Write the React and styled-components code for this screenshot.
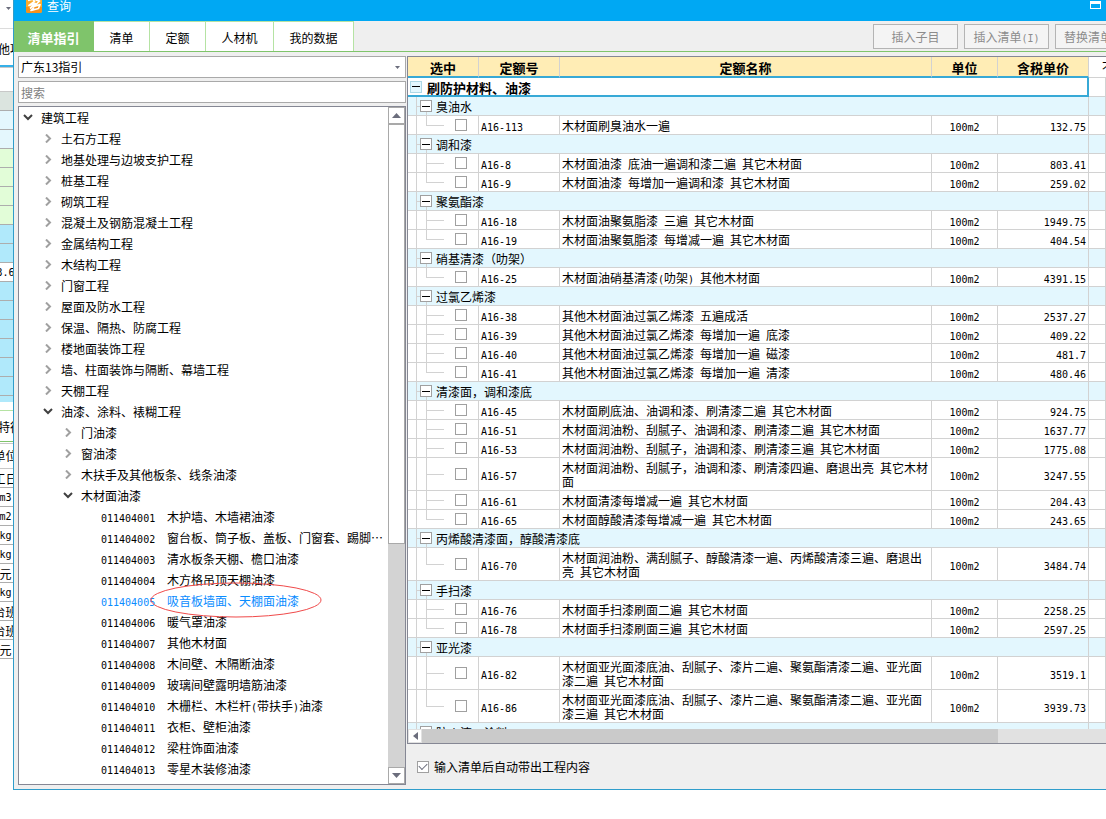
import React, { useState } from "react";
import styled, { createGlobalStyle } from "styled-components";

const COLORS = {
  titleBlue: "#00a8f3",
  frameBlue: "#2f9dcb",
  green: "#7fc46b",
  lightGreen: "#b5e3a3",
  panel: "#efefef",
  line: "#d2d2d2",
  frame: "#858794",
  inputBorder: "#a9a9a9",
  header: "#ffedb5",
  group: "#e3f7fe",
  focus: "#37a9d6",
  link: "#0a8cff",
};

const stripTop = [
  { color: "#dbe4df" },
  { color: "#e4f7fd" },
  { color: "#e4f7fd" },
  { color: "#e2fdd8" },
  { color: "#e2fdd8" },
  { color: "#e2fdd8" },
  { color: "#e2fdd8" },
  { color: "#b0e9fb" },
  { color: "#b0e9fb" },
  { color: "#fff", text: "3.6" },
  { color: "#b0e9fb" },
  { color: "#b0e9fb" },
  { color: "#b0e9fb" },
  { color: "#b0e9fb" },
  { color: "#b0e9fb" },
  { color: "#b0e9fb" },
];

const stripUnits = ["m3", "m2", "kg", "kg", "元", "kg", "台班", "台班", "元"];

const tabs = [
  { label: "清单指引", width: 80 },
  { label: "清单", width: 56 },
  { label: "定额", width: 56 },
  { label: "人材机", width: 68 },
  { label: "我的数据", width: 80 },
];

const tree = [
  { level: 0, open: true, name: "建筑工程" },
  { level: 1, name: "土石方工程" },
  { level: 1, name: "地基处理与边坡支护工程" },
  { level: 1, name: "桩基工程" },
  { level: 1, name: "砌筑工程" },
  { level: 1, name: "混凝土及钢筋混凝土工程" },
  { level: 1, name: "金属结构工程" },
  { level: 1, name: "木结构工程" },
  { level: 1, name: "门窗工程" },
  { level: 1, name: "屋面及防水工程" },
  { level: 1, name: "保温、隔热、防腐工程" },
  { level: 1, name: "楼地面装饰工程" },
  { level: 1, name: "墙、柱面装饰与隔断、幕墙工程" },
  { level: 1, name: "天棚工程" },
  { level: 1, open: true, name: "油漆、涂料、裱糊工程" },
  { level: 2, name: "门油漆" },
  { level: 2, name: "窗油漆" },
  { level: 2, name: "木扶手及其他板条、线条油漆" },
  { level: 2, open: true, name: "木材面油漆" },
  { level: 3, code: "011404001", name: "木护墙、木墙裙油漆" },
  { level: 3, code: "011404002", name: "窗台板、筒子板、盖板、门窗套、踢脚…" },
  { level: 3, code: "011404003", name: "清水板条天棚、檐口油漆" },
  { level: 3, code: "011404004", name: "木方格吊顶天棚油漆" },
  { level: 3, code: "011404005", name: "吸音板墙面、天棚面油漆", marked: true },
  { level: 3, code: "011404006", name: "暖气罩油漆" },
  { level: 3, code: "011404007", name: "其他木材面" },
  { level: 3, code: "011404008", name: "木间壁、木隔断油漆" },
  { level: 3, code: "011404009", name: "玻璃间壁露明墙筋油漆" },
  { level: 3, code: "011404010", name: "木栅栏、木栏杆(带扶手)油漆" },
  { level: 3, code: "011404011", name: "衣柜、壁柜油漆" },
  { level: 3, code: "011404012", name: "梁柱饰面油漆" },
  { level: 3, code: "011404013", name: "零星木装修油漆" },
];

const groups = [
  { name: "臭油水", items: [["A16-113", "木材面刷臭油水一遍", "132.75"]] },
  {
    name: "调和漆",
    items: [
      ["A16-8", "木材面油漆 底油一遍调和漆二遍 其它木材面", "803.41"],
      ["A16-9", "木材面油漆 每增加一遍调和漆 其它木材面", "259.02"],
    ],
  },
  {
    name: "聚氨酯漆",
    items: [
      ["A16-18", "木材面油聚氨脂漆 三遍 其它木材面", "1949.75"],
      ["A16-19", "木材面油聚氨脂漆 每增减一遍 其它木材面", "404.54"],
    ],
  },
  {
    name: "硝基清漆（叻架）",
    items: [["A16-25", "木材面油硝基清漆(叻架) 其他木材面", "4391.15"]],
  },
  {
    name: "过氯乙烯漆",
    items: [
      ["A16-38", "其他木材面油过氯乙烯漆 五遍成活", "2537.27"],
      ["A16-39", "其他木材面油过氯乙烯漆 每增加一遍 底漆", "409.22"],
      ["A16-40", "其他木材面油过氯乙烯漆 每增加一遍 磁漆", "481.7"],
      ["A16-41", "其他木材面油过氯乙烯漆 每增加一遍 清漆", "480.46"],
    ],
  },
  {
    name: "清漆面，调和漆底",
    items: [
      ["A16-45", "木材面刷底油、油调和漆、刷清漆二遍 其它木材面", "924.75"],
      ["A16-51", "木材面润油粉、刮腻子、油调和漆、刷清漆二遍 其它木材面", "1637.77"],
      ["A16-53", "木材面润油粉、刮腻子，油调和漆、刷清漆三遍 其它木材面", "1775.08"],
      [
        "A16-57",
        "木材面润油粉、刮腻子，油调和漆、刷清漆四遍、磨退出亮 其它木材面",
        "3247.55",
        true,
      ],
      ["A16-61", "木材面清漆每增减一遍 其它木材面", "204.43"],
      ["A16-65", "木材面醇酸清漆每增减一遍 其它木材面", "243.65"],
    ],
  },
  {
    name: "丙烯酸清漆面，醇酸清漆底",
    items: [
      [
        "A16-70",
        "木材面润油粉、满刮腻子、醇酸清漆一遍、丙烯酸清漆三遍、磨退出亮 其它木材面",
        "3484.74",
        true,
      ],
    ],
  },
  {
    name: "手扫漆",
    items: [
      ["A16-76", "木材面手扫漆刷面二遍 其它木材面", "2258.25"],
      ["A16-78", "木材面手扫漆刷面三遍 其它木材面", "2597.25"],
    ],
  },
  {
    name: "亚光漆",
    items: [
      [
        "A16-82",
        "木材面亚光面漆底油、刮腻子、漆片二遍、聚氨酯清漆二遍、亚光面漆二遍 其它木材面",
        "3519.1",
        true,
      ],
      [
        "A16-86",
        "木材面亚光面漆底油、刮腻子、漆片二遍、聚氨酯清漆二遍、亚光面漆三遍 其它木材面",
        "3939.73",
        true,
      ],
    ],
  },
  { name: "防火漆、涂料", items: [] },
];

// latin runs get the half-width mono face, the rest stays in the CJK face
const Mixed = ({ children }) =>
  children
    .split(/([\x20-\x7e]+)/)
    .map((part, i) => (i % 2 ? <Latin key={i}>{part}</Latin> : part));

const App = () => {
  const [activeTab, setActiveTab] = useState("清单指引");
  const [selected, setSelected] = useState("011404005");
  const [autoFill, setAutoFill] = useState(true);

  return (
    <Page>
      <GlobalStyle />
      <BackStrip>
        <StripToolbar>
          <Arrow width="5" height="3" viewBox="0 0 5 3">
            <path d="M0 0h5L2.5 3z" />
          </Arrow>
        </StripToolbar>
        <StripTab>他项</StripTab>
        <StripGap />
        {stripTop.map((row, i) => (
          <StripRow key={i} $color={row.color}>
            {row.text && <Mixed>{row.text}</Mixed>}
          </StripRow>
        ))}
        <StripEnd />
        <StripLabel>特征</StripLabel>
        <StripHead>单位</StripHead>
        <StripRow $color="#fff">工日</StripRow>
        {stripUnits.map((unit, i) => (
          <StripRow key={i} $color="#fff">
            <Mixed>{unit}</Mixed>
          </StripRow>
        ))}
      </BackStrip>

      <Dialog>
        <TitleBar>
          <Logo />
          <Title>查询</Title>
          <WindowButton aria-label="还原">
            <svg width="11" height="8" viewBox="0 0 11 8">
              <path d="M0 0h11v8H0zM1 3v4h9V3z" fill="#fff" fillRule="evenodd" />
            </svg>
          </WindowButton>
        </TitleBar>

        <TabBar>
          {tabs.map((tab) => (
            <Tab
              key={tab.label}
              $width={tab.width}
              $active={tab.label === activeTab}
              onClick={() => setActiveTab(tab.label)}
            >
              {tab.label}
            </Tab>
          ))}
          <Actions>
            <ActionButton disabled>插入子目</ActionButton>
            <ActionButton disabled>
              <Mixed>插入清单(I)</Mixed>
            </ActionButton>
            <ActionButton disabled $width={66}>
              替换清单
            </ActionButton>
          </Actions>
        </TabBar>

        <Content>
          <LeftPane>
            <SelectWrapper>
              <GuideSelect aria-label="指引">
                <option>广东13指引</option>
              </GuideSelect>
              <SelectArrow width="5" height="3" viewBox="0 0 5 3">
                <path d="M0 0h5L2.5 3z" />
              </SelectArrow>
            </SelectWrapper>
            <SearchInput type="text" placeholder="搜索" aria-label="搜索" />
            <TreeBox>
              <TreeList>
                {tree.map((node) => (
                  <TreeRow
                    key={node.code || node.name}
                    $level={node.level}
                    $active={node.code && node.code === selected}
                    onClick={() => node.code && setSelected(node.code)}
                  >
                    <Toggle node={node} />
                    {node.code && (
                      <TreeCode>
                        <Latin>{node.code}</Latin>
                      </TreeCode>
                    )}
                    <span>
                      <Mixed>{node.name}</Mixed>
                    </span>
                    {node.marked && (
                      <Ring viewBox="0 0 172 36">
                        <ellipse cx="86" cy="18" rx="85" ry="17" />
                      </Ring>
                    )}
                  </TreeRow>
                ))}
              </TreeList>
              <VerticalBar>
                <BarButton aria-label="向上">
                  <Arrow width="9" height="5" viewBox="0 0 9 5">
                    <path d="M0 5h9L4.5 0z" />
                  </Arrow>
                </BarButton>
                <VerticalThumb />
                <BarTrack />
                <BarButton aria-label="向下">
                  <Arrow width="9" height="5" viewBox="0 0 9 5">
                    <path d="M0 0h9L4.5 5z" />
                  </Arrow>
                </BarButton>
              </VerticalBar>
            </TreeBox>
          </LeftPane>

          <RightPane>
            <GridBox>
              <GridScroll>
                <Grid>
                  <colgroup>
                    <Col $width={71} />
                    <Col $width={81} />
                    <Col />
                    <Col $width={66} />
                    <Col $width={91} />
                    <Col $width={17} />
                  </colgroup>
                  <thead>
                    <tr>
                      <HeadCell>选中</HeadCell>
                      <HeadCell>定额号</HeadCell>
                      <HeadCell>定额名称</HeadCell>
                      <HeadCell>单位</HeadCell>
                      <HeadCell>含税单价</HeadCell>
                      <PlainHead>不含税单价</PlainHead>
                    </tr>
                  </thead>
                  <tbody>
                    <tr>
                      <RootCell colSpan={5}>
                        <RootInner>
                          <RootBox aria-label="折叠">
                            <Minus />
                          </RootBox>
                          <RootName>刷防护材料、油漆</RootName>
                        </RootInner>
                      </RootCell>
                      <Cell />
                    </tr>
                    {groups.map((group) => (
                      <React.Fragment key={group.name}>
                        <tr>
                          <GroupCell colSpan={5}>
                            <Line>
                              <Gutter />
                              <Stub />
                              <BoxColumn>
                                <ToggleBox aria-label="折叠">
                                  <Minus />
                                </ToggleBox>
                                <BoxStem />
                              </BoxColumn>
                              <GroupName>{group.name}</GroupName>
                            </Line>
                          </GroupCell>
                          <GroupCell />
                        </tr>
                        {group.items.map(([code, name, price, tall], i) => (
                          <tr key={code}>
                            <Cell $open>
                              <Line $tall={tall}>
                                <Gutter />
                                <Elbow>
                                  <ElbowTop />
                                  <ElbowBottom
                                    $last={i === group.items.length - 1}
                                  />
                                </Elbow>
                                <Check type="checkbox" aria-label={code} />
                              </Line>
                            </Cell>
                            <Cell>
                              <Latin>{code}</Latin>
                            </Cell>
                            <Cell>
                              <Mixed>{name}</Mixed>
                            </Cell>
                            <Cell $align="center">
                              <Latin>100m2</Latin>
                            </Cell>
                            <Cell $align="right">
                              <Latin>{price}</Latin>
                            </Cell>
                            <Cell />
                          </tr>
                        ))}
                      </React.Fragment>
                    ))}
                  </tbody>
                </Grid>
              </GridScroll>
              <HorizontalBar>
                <SideButton aria-label="向左">
                  <Arrow width="5" height="8" viewBox="0 0 5 8">
                    <path d="M5 0v8L0 4z" />
                  </Arrow>
                </SideButton>
                <HorizontalThumb />
                <HorizontalRest />
              </HorizontalBar>
            </GridBox>
            <Footer>
              <FooterCheck
                type="checkbox"
                checked={autoFill}
                onChange={(e) => setAutoFill(e.target.checked)}
              />
              输入清单后自动带出工程内容
            </Footer>
          </RightPane>
        </Content>
      </Dialog>
    </Page>
  );
};

const Logo = () => (
  <LogoSvg width="16" height="13" viewBox="0 0 16 13">
    <rect x="0" y="-3" width="16" height="16" rx="2" fill="#fbab2c" />
    <path d="M0 7h16v4a2 2 0 0 1-2 2H2a2 2 0 0 1-2-2z" fill="#f5911e" />
    <path
      d="M2 0.500L7 -1L8.500 1.500L3 5.500L9.500 3.500L4 8.500M9.500 0L13.500 1L8 6.500L14 4.500L12.500 8.500L5 10.500L8 7.500"
      fill="none"
      stroke="#fff"
      strokeWidth="1.700"
      strokeLinejoin="round"
    />
  </LogoSvg>
);

const Minus = () => (
  <svg width="8" height="1" viewBox="0 0 8 1">
    <path d="M0 0h8v1H0z" fill="#000" />
  </svg>
);

const Toggle = ({ node }) => {
  if (node.code) return <ToggleSpace />;
  return (
    <ToggleButton aria-label={node.open ? "收起" : "展开"}>
      {node.open ? (
        <svg width="10" height="7" viewBox="0 0 10 7">
          <path d="M1 1l4 4 4-4" fill="none" stroke="#404040" strokeWidth="2" />
        </svg>
      ) : (
        <svg width="10" height="9" viewBox="0 0 10 9">
          <path
            d="M3 0.5l4 4-4 4"
            fill="none"
            stroke="#a0a0a0"
            strokeWidth="2"
          />
        </svg>
      )}
    </ToggleButton>
  );
};

const GlobalStyle = createGlobalStyle`
  * {
    box-sizing: border-box;
  }
  body {
    margin: 0;
    background: #fff;
    overflow: hidden;
  }
  body, button, input, select {
    font-family: "Noto Sans CJK SC", sans-serif;
    font-size: 12px;
    line-height: 14px;
    color: #000;
  }
  svg {
    display: block;
    flex: none;
  }
`;

const Page = styled.div`
  display: flex;
  height: 100vh;
`;

const Latin = styled.span`
  font-family: "DejaVu Sans Mono", monospace;
  font-size: 10px;
  line-height: 10px;
`;

const Arrow = styled.svg`
  fill: #6b6d7c;
`;

/* main window showing behind the dialog */
const BackStrip = styled.div`
  width: 13px;
  flex: none;
  overflow: hidden;
  white-space: nowrap;
`;

const StripToolbar = styled.div`
  height: 29px;
  padding: 7px 2px 0 6px;
  border-bottom: 1px solid #dcdcdc;
`;

const StripTab = styled.div`
  height: 38px;
  line-height: 40px;
  text-indent: -2px;
  border-bottom: 2px solid #36b0e8;
`;

const StripGap = styled.div`
  height: 25px;
  border-top: 1px solid #c8c8c8;
  border-bottom: 1px solid #c8c8c8;
`;

const StripRow = styled.div`
  display: flex;
  align-items: center;
  justify-content: center;
  height: 19px;
  padding: 2px 2px 0 0;
  background: ${(props) => props.$color};
  border-bottom: 1px solid #adadad;
`;

const StripEnd = styled.div`
  height: 6px;
  background: #b0e9fb;
`;

const StripLabel = styled.div`
  height: 32px;
  margin-top: 8px;
  line-height: 32px;
  text-indent: -2px;
  border-top: 1px solid ${COLORS.lightGreen};
  border-bottom: 1px solid ${COLORS.green};
`;

const StripHead = styled.div`
  display: flex;
  align-items: center;
  justify-content: center;
  height: 26px;
  margin-top: 1px;
  padding-right: 2px;
  border-top: 1px solid #c8c8c8;
  border-bottom: 1px solid #c8c8c8;
`;

const Dialog = styled.main`
  display: flex;
  flex-direction: column;
  flex: 1;
  min-width: 0;
  height: calc(100vh - 29px);
  background: ${COLORS.panel};
  border-left: 1px solid ${COLORS.frameBlue};
  border-bottom: 1px solid ${COLORS.frameBlue};
`;

const TitleBar = styled.header`
  display: flex;
  align-items: flex-start;
  flex: none;
  height: 21px;
  padding: 0 5px 0 12px;
  background: ${COLORS.titleBlue};
`;

const LogoSvg = styled.svg`
  margin-right: 5px;
`;

const Title = styled.span`
  line-height: 12px;
  color: #fff;
`;

const WindowButton = styled.button`
  margin-left: auto;
  padding: 1px 0;
  border: none;
  background: none;
`;

const TabBar = styled.nav`
  display: flex;
  flex: none;
  height: 31px;
  border-bottom: 1px solid ${COLORS.green};
`;

const Tab = styled.button`
  flex: none;
  width: ${(props) => props.$width}px;
  padding: 3px 0 0;
  border-style: solid;
  border-width: 1px 1px 0 0;
  border-color: ${(props) => (props.$active ? COLORS.green : COLORS.lightGreen)};
  background: ${(props) => (props.$active ? COLORS.green : "#fff")};
  color: ${(props) => (props.$active ? "#fff" : "#000")};
  font-size: ${(props) => (props.$active ? 13 : 12)}px;
  font-weight: ${(props) => (props.$active ? "bold" : "normal")};
`;

const Actions = styled.div`
  display: flex;
  gap: 6px;
  width: 233px;
  margin-left: auto;
  padding-top: 3px;
  overflow: hidden;
`;

const ActionButton = styled.button`
  flex: none;
  width: ${(props) => props.$width || 85}px;
  height: 25px;
  padding: 0;
  border: 1px solid #b4b4b4;
  background: #f4f4f4;
  color: #8c8c8c;
`;

const Content = styled.div`
  display: flex;
  flex: 1;
  min-height: 0;
  gap: 1px;
  padding: 4px 0 4px 4px;
`;

const LeftPane = styled.section`
  display: flex;
  flex-direction: column;
  flex: none;
  gap: 3px;
  width: 388px;
`;

const SelectWrapper = styled.div`
  position: relative;
`;

const GuideSelect = styled.select`
  display: block;
  width: 100%;
  height: 22px;
  padding: 0 2px;
  border: 1px solid ${COLORS.inputBorder};
  border-radius: 0;
  background: #fff;
  appearance: none;
`;

const SelectArrow = styled(Arrow)`
  position: absolute;
  top: 10px;
  right: 6px;
  pointer-events: none;
`;

const SearchInput = styled.input`
  height: 22px;
  margin: 0;
  padding: 0 2px;
  border: 1px solid ${COLORS.inputBorder};
  &::placeholder {
    color: #808080;
  }
`;

const TreeBox = styled.div`
  display: flex;
  flex: 1;
  min-height: 0;
  border: 1px solid ${COLORS.frame};
  background: #fff;
`;

const TreeList = styled.ul`
  flex: 1;
  min-width: 0;
  margin: 0;
  padding: 0;
  list-style: none;
`;

const TreeRow = styled.li`
  position: relative;
  display: flex;
  align-items: center;
  height: 21px;
  padding-left: ${(props) => 4 + props.$level * 20}px;
  white-space: nowrap;
  color: ${(props) => (props.$active ? COLORS.link : "#000")};
`;

const ToggleSpace = styled.span`
  width: 18px;
`;

const ToggleButton = styled.button`
  width: 18px;
  padding: 0;
  border: none;
  background: none;
`;

const TreeCode = styled.span`
  width: 66px;
`;

const Ring = styled.svg`
  position: absolute;
  z-index: 1;
  top: -8px;
  left: 131px;
  width: 172px;
  height: 36px;
  fill: none;
  stroke: #f04a4a;
  pointer-events: none;
`;

const VerticalBar = styled.div`
  display: flex;
  flex-direction: column;
  width: 17px;
`;

const BarButton = styled.button`
  display: flex;
  align-items: center;
  justify-content: center;
  flex: none;
  height: 17px;
  padding: 0;
  border: 1px solid ${COLORS.inputBorder};
  background: #fff;
`;

const VerticalThumb = styled.div`
  flex: 0 0 62%;
  border: 1px solid ${COLORS.inputBorder};
  background: #fff;
`;

const BarTrack = styled.div`
  flex: 1;
  background: #d3d3d3;
`;

const RightPane = styled.section`
  display: flex;
  flex-direction: column;
  flex: 1;
  min-width: 0;
`;

const GridBox = styled.div`
  display: flex;
  flex-direction: column;
  flex: 1;
  min-height: 0;
  border: solid ${COLORS.frame};
  border-width: 1px 0 1px 1px;
  background: #fff;
`;

const GridScroll = styled.div`
  flex: 1;
  min-height: 0;
  overflow: hidden;
`;

const Grid = styled.table`
  width: 100%;
  table-layout: fixed;
  border-collapse: separate;
  border-spacing: 0;
`;

const Col = styled.col`
  width: ${(props) => (props.$width ? `${props.$width}px` : "auto")};
`;

const HeadCell = styled.th`
  height: 21px;
  padding: 2px 0 0;
  border-right: 1px solid ${COLORS.line};
  border-bottom: 2px solid ${COLORS.focus};
  background: ${COLORS.header};
  font-size: 13px;
`;

const PlainHead = styled.th`
  padding: 0 0 0 13px;
  overflow: hidden;
  border-bottom: 1px solid ${COLORS.line};
  font-weight: normal;
  text-align: left;
  white-space: nowrap;
`;

const Cell = styled.td`
  padding: ${(props) => (props.$open ? "0" : "2px 2px 0")};
  border-right: 1px solid ${COLORS.line};
  border-bottom: 1px solid ${COLORS.line};
  text-align: ${(props) => props.$align || "left"};
  vertical-align: middle;
`;

const GroupCell = styled.td`
  padding: 0;
  border-right: 1px solid ${COLORS.line};
  border-bottom: 1px solid ${COLORS.line};
  background: ${COLORS.group};
`;

const RootCell = styled.td`
  height: 19px;
  padding: 0;
  border-right: 2px solid ${COLORS.focus};
  border-bottom: 2px solid ${COLORS.focus};
`;

const RootInner = styled.div`
  display: flex;
  align-items: center;
  gap: 5px;
  height: 17px;
  padding-left: 2px;
`;

const RootName = styled.span`
  padding-top: 2px;
  font-size: 13px;
  font-weight: bold;
`;

const Line = styled.div`
  display: flex;
  align-items: center;
  height: ${(props) => (props.$tall ? 32 : 18)}px;
`;

const Gutter = styled.span`
  align-self: stretch;
  width: 9px;
  border-right: 1px solid ${COLORS.line};
`;

const Stub = styled.span`
  width: 3px;
  height: 1px;
  background: ${COLORS.line};
`;

const BoxColumn = styled.span`
  display: flex;
  flex-direction: column;
  align-items: center;
  align-self: stretch;
  padding-top: 3px;
`;

const ToggleBox = styled.button`
  display: flex;
  align-items: center;
  justify-content: center;
  flex: none;
  width: 12px;
  height: 12px;
  padding: 0;
  border: 1px solid #a0a0a0;
  background: #fff;
`;

const RootBox = styled(ToggleBox)`
  border-color: #add8e6;
  background: ${COLORS.group};
`;

const BoxStem = styled.span`
  width: 1px;
  flex: 1;
  background: ${COLORS.line};
`;

const GroupName = styled.span`
  padding: 2px 0 0 4px;
`;

const Elbow = styled.span`
  display: flex;
  flex-direction: column;
  align-self: stretch;
  width: 18px;
  margin: 0 11px 0 9px;
`;

const ElbowTop = styled.span`
  flex: 1;
  border: solid ${COLORS.line};
  border-width: 0 0 1px 1px;
`;

const ElbowBottom = styled.span`
  flex: 1;
  border-left: 1px solid ${(props) => (props.$last ? "transparent" : COLORS.line)};
`;

const Check = styled.input`
  width: 12px;
  height: 12px;
  margin: 0;
  border: 1px solid #a0a0a0;
  background: #fff;
  appearance: none;
`;

const HorizontalBar = styled.div`
  display: flex;
  flex: none;
  height: 14px;
`;

const SideButton = styled.button`
  display: flex;
  align-items: center;
  justify-content: center;
  flex: none;
  width: 14px;
  padding: 0;
  border: 1px solid #e1e1e1;
  background: #fff;
`;

const HorizontalThumb = styled.div`
  flex: 16;
  background: #cacaca;
`;

const HorizontalRest = styled.div`
  flex: 3;
  background: #e1e1e1;
`;

const Footer = styled.label`
  display: flex;
  align-items: center;
  gap: 5px;
  flex: none;
  height: 41px;
  padding: 4px 10px 0;
`;

const FooterCheck = styled(Check)`
  display: grid;
  place-items: center;
  &:checked::before {
    content: "";
    width: 7px;
    height: 4px;
    margin-bottom: 2px;
    border: solid #6b6d7c;
    border-width: 0 0 1px 1px;
    transform: rotate(-45deg);
  }
`;

export default App;
